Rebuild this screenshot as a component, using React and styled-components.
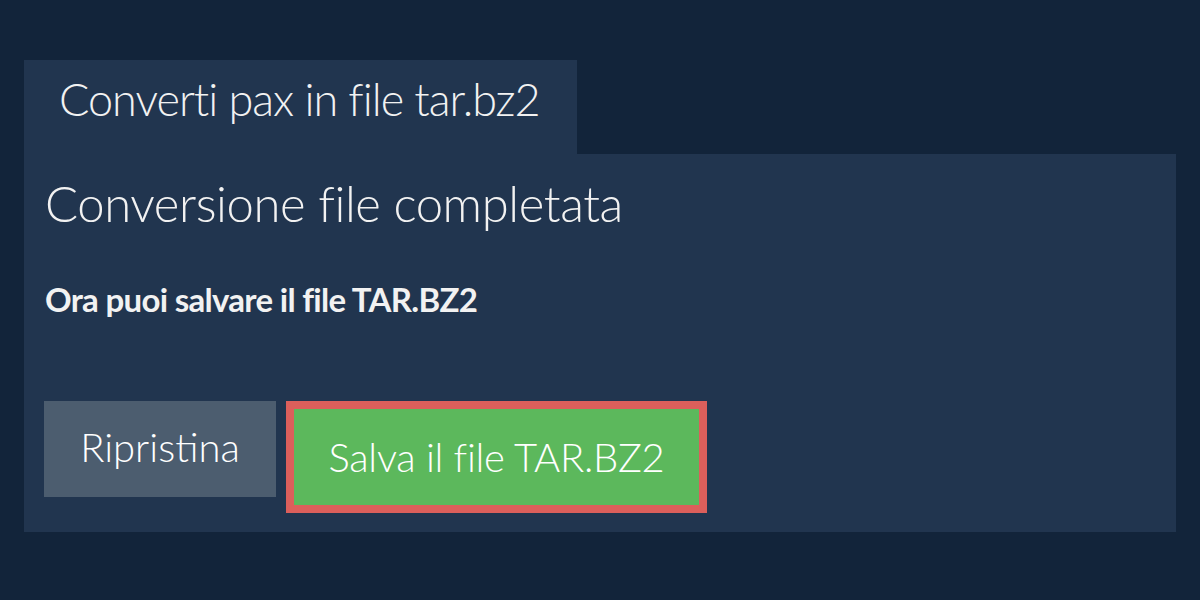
import React from 'react';
import styled, { createGlobalStyle } from 'styled-components';

const GlobalStyle = createGlobalStyle`
  body {
    margin: 0;
    background: #12243a;
    font-family: 'Lato', 'Open Sans', sans-serif;
    color: #f2f2f2;
  }
`;

const App = () => {
  return (
    <>
      <GlobalStyle />
      <Page>
        <Tab>Converti pax in file tar.bz2</Tab>
        <Panel>
          <Heading>Conversione file completata</Heading>
          <Message>Ora puoi salvare il file TAR.BZ2</Message>
          <Actions>
            <ResetButton>Ripristina</ResetButton>
            <SaveButton>Salva il file TAR.BZ2</SaveButton>
          </Actions>
        </Panel>
      </Page>
    </>
  );
};

export default App;

const Page = styled.div`
  padding: 60px 24px;
  display: flex;
  flex-direction: column;
  align-items: flex-start;
`;

const Tab = styled.div`
  background: #21354f;
  width: 553px;
  height: 94px;
  line-height: 78px;
  padding: 0 35px;
  font-size: 45px;
  font-weight: 300;
  letter-spacing: -1px;
  box-sizing: border-box;
`;

const Panel = styled.div`
  background: #21354f;
  align-self: stretch;
  padding: 20px 20px 19px;
  display: flex;
  flex-direction: column;
`;

const Heading = styled.h1`
  margin: 0 0 0 1px;
  font-size: 49px;
  font-weight: 300;
  line-height: 59px;
  letter-spacing: -0.4px;
`;

const Message = styled.p`
  margin: 46px 0 0 1px;
  font-size: 33px;
  font-weight: 700;
  line-height: 40px;
  letter-spacing: -0.7px;
`;

const Actions = styled.div`
  display: flex;
  align-items: flex-start;
  gap: 10px;
  margin-top: 82px;
`;

const Button = styled.button`
  font-family: 'Lato', 'Open Sans', sans-serif;
  font-size: 40px;
  font-weight: 300;
  color: #fff;
  border: none;
  cursor: pointer;
  box-sizing: border-box;
`;

const ResetButton = styled(Button)`
  background: #4c5d6f;
  width: 232px;
  height: 96px;
  padding: 0 0 4px;
`;

const SaveButton = styled(Button)`
  background: #5cb85c;
  border: 8px solid #dc5f5b;
  width: 421px;
  height: 112px;
  letter-spacing: -0.3px;
`;
